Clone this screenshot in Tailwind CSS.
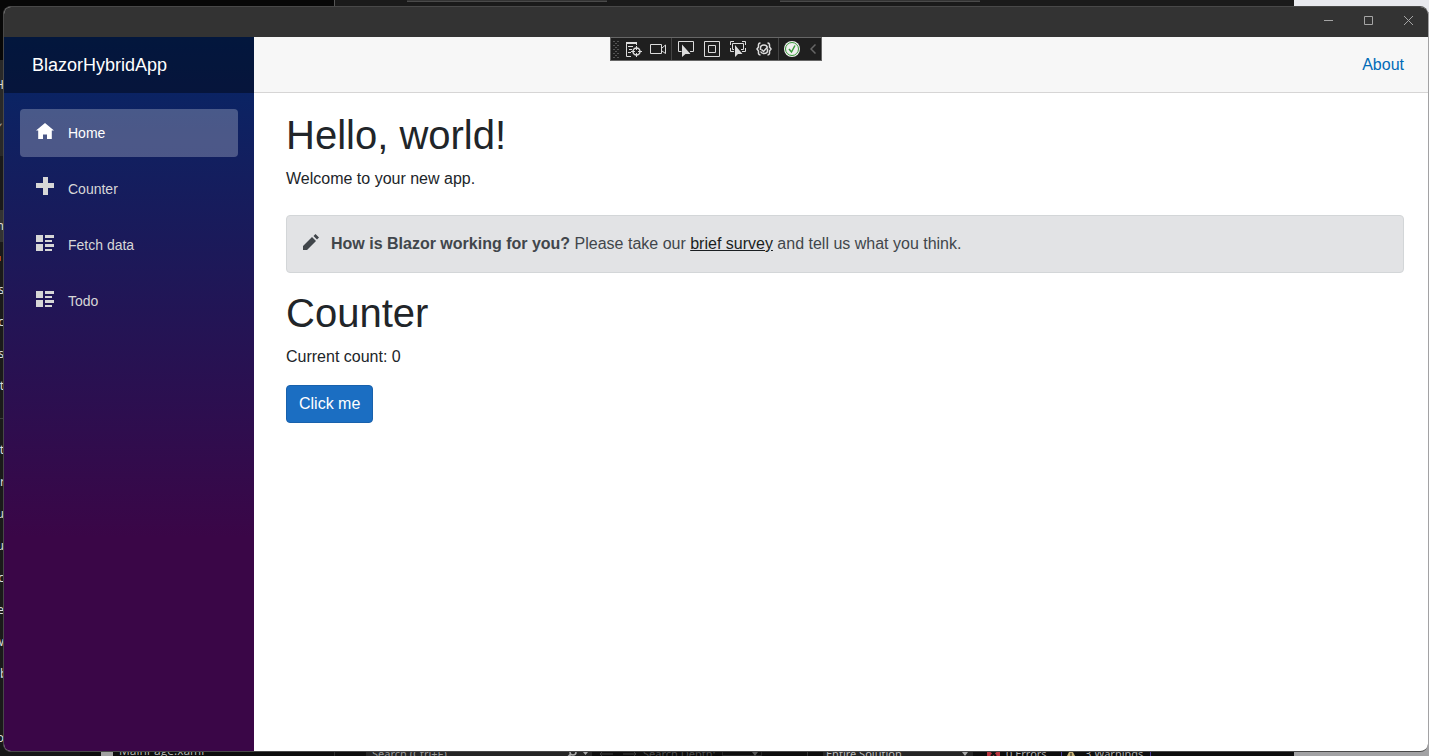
<!DOCTYPE html>
<html lang="en">
<head>
<meta charset="utf-8">
<meta name="viewport" content="width=device-width, initial-scale=1">
<title>BlazorHybridApp</title>
<script src="https://cdn.jsdelivr.net/npm/@tailwindcss/browser@4"></script>
</head>
<body class="relative h-screen overflow-hidden bg-[#1a1a1a] pt-[6px] pr-px pb-1 pl-[3px] font-['Liberation_Sans',Arial,sans-serif] text-base text-[#212529]">

<!-- IDE behind the app window -->
<div class="absolute inset-0 overflow-hidden font-['Noto_Sans',sans-serif] text-xs text-[#dcdcdc]" aria-hidden="true">
  <div class="absolute top-0 left-0 h-15 w-[334px] bg-[#070707]"></div>
  <div class="absolute top-0 left-[334px] h-2 w-px bg-[#555]"></div>
  <div class="absolute top-0 left-[407px] h-[2px] w-[200px] border-b border-[#4a4a4a] bg-[#333]"></div>
  <div class="absolute top-0 left-[780px] h-[2px] w-[200px] border-b border-[#4a4a4a] bg-[#333]"></div>
  <div class="absolute top-0 right-0 h-20 w-[135px] bg-[#e8e9ee]"></div>
  <div class="absolute top-15 left-0 h-24 w-1 bg-[#292929]"></div>
  <div class="absolute top-[76px] left-0 flex h-[18px] w-1 items-center justify-end overflow-hidden">H</div>
  <div class="absolute top-[119px] left-0 flex h-4 w-1 items-center justify-end overflow-hidden text-[#999]">✓</div>
  <div class="absolute top-[210px] left-0 flex w-1 flex-col overflow-hidden">
    <div class="flex h-8 items-center justify-end bg-[#333]">n</div>
    <div class="flex h-8 items-center"><span class="h-[5px] w-px bg-[#b4431c]"></span></div>
    <div class="flex h-8 items-center justify-end">s</div>
    <div class="flex h-8 items-center justify-end">c</div>
    <div class="flex h-8 items-center justify-end">us</div>
    <div class="flex h-8 items-center justify-end">t</div>
    <div class="flex h-8 items-center"><span class="h-px w-full bg-[#3d3d3d]"></span></div>
    <div class="flex h-8 items-center justify-end">ct</div>
    <div class="flex h-8 items-center">r</div>
    <div class="flex h-8 items-center justify-end">u</div>
    <div class="flex h-8 items-center justify-end">u</div>
    <div class="flex h-8 items-center justify-end">rc</div>
    <div class="flex h-8 items-center justify-end">ie</div>
    <div class="flex h-8 items-center justify-end">w</div>
    <div class="flex h-8 items-center">b</div>
    <div class="h-8"></div>
    <div class="flex h-8 items-center justify-end">o</div>
  </div>
  <div class="absolute inset-x-0 bottom-0 h-3 bg-[#0d0d0d] leading-4 whitespace-nowrap">
    <div class="absolute top-0 left-0 h-3 w-20 bg-[#171717]"></div>
    <div class="absolute top-0 left-[101px] h-3 w-3 bg-[#a0a0a0]"></div>
    <div class="absolute -top-px left-[119px] font-['Open_Sans',sans-serif] text-[#b5b5b5]">MainPage.xaml</div>
    <div class="absolute top-0 left-[334px] h-3 w-px bg-[#2c2c2c]"></div>
    <div class="absolute top-0 left-[366px] h-3 w-[226px] bg-[#252525]"></div>
    <div class="absolute top-[2px] left-[372px] text-[11px] text-[#999]">Search (Ctrl+F)</div>
    <svg class="absolute top-[6px] left-[566px] h-2 w-24" viewBox="0 0 96 8" fill="none" stroke="#aaa">
      <circle cx="7" cy="2" r="3" stroke-width="1.500"/><path d="M5 4 1 8" stroke-width="2"/><path d="M17 2h5l-2.500 3z" fill="#aaa" stroke="none"/>
      <path d="M34 4h13M34 4l3-3M34 4l3 3M57 4h13M70 4l-3-3M70 4l-3 3" stroke="#3c3c3c"/>
    </svg>
    <div class="absolute top-[2px] left-[643px] text-[11px] text-[#4a4a4a]">Search Depth:</div>
    <div class="absolute top-0 left-[722px] h-3 w-10 border border-[#262626]"></div>
    <svg class="absolute top-[8px] left-[752px] h-1 w-[6px]" viewBox="0 0 6 4"><path d="M0 0h6L3 4z" fill="#555"/></svg>
    <div class="absolute top-0 left-[807px] h-3 w-px bg-[#333]"></div>
    <div class="absolute top-0 left-[823px] h-3 w-[150px] bg-[#252525]"></div>
    <div class="absolute top-[2px] left-[826px] text-[11px] text-[#bbb]">Entire Solution</div>
    <svg class="absolute top-[8px] left-[962px] h-1 w-[6px]" viewBox="0 0 6 4"><path d="M0 0h6L3 4z" fill="#aaa"/></svg>
    <svg class="absolute top-[2px] left-[987px] h-3 w-[13px]" viewBox="0 0 13 12"><rect width="13" height="12" rx="3" fill="#b8343e"/><path d="m4 5 5 5m0-5-5 5" stroke="#111" stroke-width="2"/></svg>
    <div class="absolute top-[2px] left-[1006px] text-[11px] text-[#aaa]">0 Errors</div>
    <div class="absolute top-0 left-[1061px] h-3 w-px bg-[#4d3fa0]"></div>
    <svg class="absolute top-[4px] left-[1065px] h-3 w-3" viewBox="0 0 12 12"><path d="M6 0 12 12H0z" fill="#c4ae73"/><path d="M6 5v5" stroke="#111" stroke-width="1"/></svg>
    <div class="absolute top-[2px] left-[1085px] text-[11px] text-[#aaa]">3 Warnings</div>
    <div class="absolute top-0 left-[1150px] h-3 w-px bg-[#4d3fa0]"></div>
    <div class="absolute top-0 right-0 h-3 w-[135px] bg-[#a2a2a4]"></div>
  </div>
  <div class="absolute top-3 right-0 bottom-2 w-1 bg-[#a2a2a4]"></div>
</div>

<!-- App window -->
<div class="relative flex h-full flex-col overflow-hidden rounded-lg border-t border-b border-l border-[#484848] bg-white">
  <div class="flex h-[30px] shrink-0 justify-end bg-[#333] text-[#a5a5a5]">
    <button class="flex w-10 justify-center pt-2" aria-label="Minimize"><svg class="size-[11px]" viewBox="0 0 11 11" fill="none" stroke="currentColor"><path d="M1 5.500h9"/></svg></button>
    <button class="flex w-10 justify-center pt-2" aria-label="Maximize"><svg class="size-[11px]" viewBox="0 0 11 11" fill="none" stroke="currentColor"><path d="M1.500 1.500h8v8h-8z"/></svg></button>
    <button class="flex w-10 justify-center pt-2" aria-label="Close"><svg class="size-[11px]" viewBox="0 0 11 11" fill="none" stroke="currentColor"><path d="m1 1 9 9m0-9-9 9"/></svg></button>
  </div>

  <div class="flex min-h-0 flex-1">
    <aside class="w-[250px] shrink-0 bg-[linear-gradient(180deg,rgb(5,39,103)_0%,#3a0647_70%)]">
      <div class="flex h-14 items-center bg-black/40 pl-7"><a href="#" class="text-lg text-white">BlazorHybridApp</a></div>
      <nav class="flex flex-col gap-2 p-4 text-sm text-[#d7d7d7]">
        <a href="#" class="flex h-12 items-center rounded bg-white/25 pl-4 text-white" aria-current="page">
          <svg class="mr-[14px] mb-1 h-4 w-[18px]" viewBox="0 0 18 16" fill="currentColor"><path d="M9 0 0 7.500h2.200V16H7v-4.500h4V16h4.800V7.500H18z"/></svg>Home</a>
        <a href="#" class="flex h-12 items-center rounded pl-4">
          <svg class="mr-[14px] mb-[6px] size-[18px]" viewBox="0 0 18 18" fill="currentColor"><path d="M7 0h5v6h6v5h-6v7H7v-7H0V6h7z"/></svg>Counter</a>
        <a href="#" class="flex h-12 items-center rounded pl-4">
          <svg class="mr-[14px] mb-1 h-4 w-[18px]" viewBox="0 0 18 16" fill="currentColor"><path d="M0 0h7v7H0zM9 0h9v3H9zM9 5h7v2H9zM0 9h7v7H0zM9 9h9v3H9zM9 14h7v2H9z"/></svg>Fetch data</a>
        <a href="#" class="flex h-12 items-center rounded pl-4">
          <svg class="mr-[14px] mb-1 h-4 w-[18px]" viewBox="0 0 18 16" fill="currentColor"><path d="M0 0h7v7H0zM9 0h9v3H9zM9 5h7v2H9zM0 9h7v7H0zM9 9h9v3H9zM9 14h7v2H9z"/></svg>Todo</a>
      </nav>
    </aside>

    <main class="min-w-0 flex-1">
      <header class="flex h-14 items-center justify-end border-b border-[#d6d5d5] bg-[#f7f7f7] pr-6"><a href="#" class="text-[#006bb7]">About</a></header>
      <article class="pt-[18px] pr-6 pl-8">
        <h1 class="mb-2 text-[40px] leading-12">Hello, world!</h1>
        <p>Welcome to your new app.</p>
        <div class="mt-6 mb-4 flex items-center rounded border border-[#d3d6d8] bg-[#e2e3e5] p-4 text-[#41464b]">
          <svg class="mr-3 mb-1 size-4 shrink-0" viewBox="0 0 16 16" fill="currentColor"><path d="M12.500 0 10.500 2l3.500 3.500 2-2zM9 3 0 12v4h4l9-9z"/></svg>
          <p><strong>How is Blazor working for you?</strong> Please take our <a href="#" class="text-[#1a1e21] underline">brief survey</a> and tell us what you think.</p>
        </div>
        <h1 class="mb-2 text-[40px] leading-12">Counter</h1>
        <p class="mb-4">Current count: 0</p>
        <button class="rounded border border-[#1861ac] bg-[#1b6ec2] px-3 py-[6px] text-white">Click me</button>
      </article>
    </main>
  </div>
</div>

<!-- Debug toolbar floating over the window -->
<div class="absolute top-[37px] left-[610px] flex h-6 w-[212px] items-center border border-[#666] bg-[#1f1f1f] text-[#dcdcdc]">
  <svg class="mr-[7px] ml-[2px] h-[17px] w-[6px]" viewBox="0 0 6 17" fill="#555"><path d="M0 0h2v1H0zM4 0h2v1H4zM2 2h2v1H2zM0 4h2v1H0zM4 4h2v1H4zM2 6h2v1H2zM0 8h2v1H0zM4 8h2v1H4zM2 10h2v1H2zM0 12h2v1H0zM4 12h2v1H4zM2 14h2v1H2zM0 16h2v1H0zM4 16h2v1H4z"/></svg>
  <button class="mr-2" aria-label="Go to live visual tree"><svg class="size-4 overflow-visible" viewBox="0 0 16 16" fill="none" stroke="currentColor"><path d="M.5 1v14.500H5M0 1.500h11M0 2.500h11M10.500 1v3M2 5.500h5M3 8.500h3M2 11.500h3"/><circle cx="10.500" cy="10.500" r="3.500" stroke-width="1.500"/><path d="M10.500 5v4M10.500 12v4M5 10.500h4M12 10.500h4"/></svg></button>
  <button class="mr-1" aria-label="Record"><svg class="h-4 w-[17px]" viewBox="0 0 17 16" fill="none" stroke="currentColor"><path d="M.5 3.500h11v9H.5zM12 7l3.500-3v8.500L12 10"/></svg></button>
  <span class="mr-[6px] h-[22px] w-px bg-[#444]"></span>
  <button class="mr-[10px]" aria-label="Select element"><svg class="size-4" viewBox="0 0 16 16" fill="none" stroke="currentColor"><path d="M3.500 10.500H.5v-10h15v10H12"/><path d="M4 3.500V16l3.500-3h5z" fill="currentColor" stroke="none"/></svg></button>
  <button class="mr-[10px]" aria-label="Display layout adorners"><svg class="size-4" viewBox="0 0 16 16" fill="none" stroke="currentColor"><path d="M.5.5h15v15H.5zM4.500 4.500h7v7h-7z"/></svg></button>
  <button class="mr-[10px]" aria-label="Track focused element"><svg class="size-4" viewBox="0 0 16 16" fill="none" stroke="currentColor"><path d="M.5 4V.5H4M12 .5h3.500V4M15.500 7v3.500H12M4 10.500H.5V7M4 8.500H2.500v-6h11v6H11"/><path d="M5 4v12l3-3h4.500z" fill="currentColor" stroke="none"/></svg></button>
  <button class="mr-[6px]" aria-label="Binding failures"><svg class="size-4" viewBox="0 0 16 16" fill="none" stroke="currentColor" stroke-width="1.500"><path d="M4.500 2C2 2 2.500 4 2.500 6L1 8l1.500 2c0 2-.5 4 2 4M11.500 2c2.500 0 2 2 2 4L15 8l-1.500 2c0 2 .5 4-2 4"/><path d="M4.500 9V7C4.500 5 6 4 8 4s3 1 3.500 2.500M11.500 7.500v2c0 2-1.500 3-3.500 3s-3-1-3.500-2M5.500 8.500l2 2 4-4.500"/></svg></button>
  <span class="mr-[5px] h-[22px] w-px bg-[#444]"></span>
  <button class="mr-[10px]" aria-label="Hot Reload"><svg class="size-4" viewBox="0 0 16 16" fill="none"><circle cx="8" cy="8" r="8" fill="#f0f0f0"/><circle cx="8" cy="8" r="6.500" stroke="#389a38"/><path d="m5 8 2.500 3L11 4.500" stroke="#389a38" stroke-width="1.500"/></svg></button>
  <button aria-label="Collapse toolbar"><svg class="h-[10px] w-[6px]" viewBox="0 0 6 10" fill="none" stroke="#666" stroke-width="1.500"><path d="M5.500.5 1 5l4.500 4.500"/></svg></button>
</div>
</body>
</html>
